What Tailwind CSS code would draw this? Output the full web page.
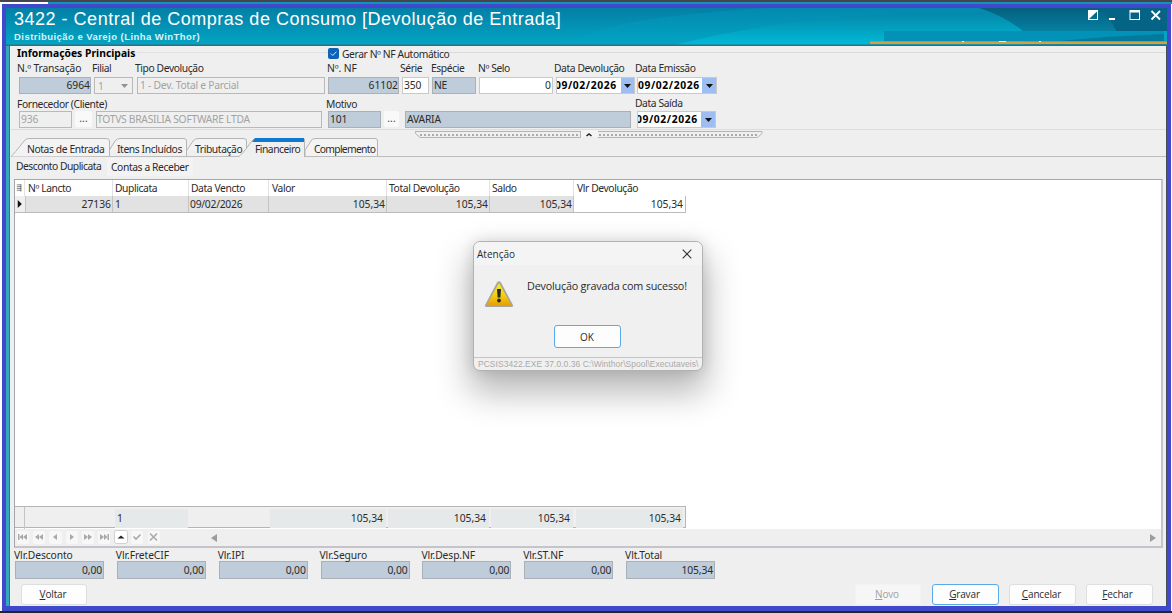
<!DOCTYPE html>
<html lang="pt-BR">
<head>
  <meta charset="UTF-8">
  <meta name="viewport" content="width=device-width, initial-scale=1.0">
  <title>3422 - Central de Compras de Consumo</title>
  <script src="https://cdn.jsdelivr.net/npm/@tailwindcss/browser@4"></script>
</head>
<body class="w-[1172px] h-[613px] overflow-hidden bg-white font-['Noto_Sans',sans-serif] text-[10.3px] leading-[14px] tracking-[-0.4px] text-[#2b2b2b] whitespace-nowrap">
  <div class="relative h-[613px] flex flex-col">
    <div class="h-[2px] shrink-0 bg-[#46454f]"></div>
    <div class="h-[2px] shrink-0 bg-[#1293b4] ml-[48px]"></div>

    <!-- window frame -->
    <div class="ml-[2px] mr-[1px] h-[607px] shrink-0 border-4 border-b-[5px] border-[#4048cb] flex flex-col bg-[#4048cb]">
      <!-- title bar -->
      <header class="relative h-[38px] shrink-0 bg-linear-to-b from-[#047fa5] to-[#02a6c5]">
        <svg class="absolute inset-0 w-full h-full" viewBox="6 8 1161 38" preserveAspectRatio="none">
          <defs>
            <linearGradient id="upper" x1="0" y1="0" x2="0" y2="1">
              <stop offset="0" stop-color="#0390b5"/><stop offset="1" stop-color="#00a5c5"/>
            </linearGradient>
            <linearGradient id="wave" x1="0" y1="0" x2="0" y2="1">
              <stop offset="0" stop-color="#0587a9"/><stop offset="1" stop-color="#00bcd9"/>
            </linearGradient>
            <linearGradient id="deep" x1="0" y1="0" x2="0" y2="1">
              <stop offset="0" stop-color="#05607f"/><stop offset="1" stop-color="#0581a2"/>
            </linearGradient>
          </defs>
          <path d="M560 46 Q600 18 770 8 H1167 V46Z" fill="url(#upper)" opacity=".6"/>
          <path d="M675 45 Q770 20 900 13 Q1010 10 1100 20 V46 H675Z" fill="url(#wave)"/>
          <path d="M979 8 Q1005 16 1024 32 H1167 V8Z" fill="url(#deep)"/>
          <path d="M1100 8Q1110 18 1117 32 H1167 V8Z" fill="#056486"/>
          <path d="M1024 31H1167V46H1024Z" fill="#03a3c2"/>
          <rect x="884" y="31" width="280" height="10" fill="#0292b7"/>
          <path d="M1060 41Q1110 36 1164 34 V41Z" fill="#03799c"/>
          <rect x="870" y="41.500" width="297" height="2.500" fill="#d6a13a"/>
          <path d="M962 41.500h2M999 41.500h7M1039 41.500h2" stroke="#e9f3ee" stroke-width="1"/>
          <path d="M6 45.300H1167" stroke="#3f6974" stroke-width="1.400"/>
        </svg>
        <div class="relative flex justify-between pl-2 text-white font-['Liberation_Sans',Arial,sans-serif]">
          <div>
            <h1 class="text-[18px] leading-[23px] tracking-[0.51px]">3422 - Central de Compras de Consumo [Devolução de Entrada]</h1>
            <p class="text-[9.5px] leading-[12px] font-bold tracking-[0.45px] text-[#d9f3fa]">Distribuição e Varejo (Linha WinThor)</p>
          </div>
          <svg class="w-[76px] h-[14px] mr-[4px]" viewBox="1087 8 76 14" fill="none" stroke="#fff">
            <rect x="1088.5" y="10.5" width="9" height="9"/>
            <path d="M1089 19V11h8.500z" fill="#fff" stroke="none"/>
            <path d="M1109 19h6" stroke-width="2"/>
            <rect x="1130" y="10.500" width="9.500" height="9"/>
            <path d="M1130 11.500h9.500" stroke-width="2"/>
            <path d="M1151.500 11l8.500 8.500M1160 11l-8.500 8.500" stroke-width="1.800"/>
          </svg>
        </div>
      </header>

      <!-- content -->
      <main class="h-[560px] shrink-0 bg-[#efefef] border-l-[3px] border-l-[#35a9bc] border-r border-r-[#44505a] flex flex-col">
       <div class="h-[560px] border-l border-[#5d6569] pl-px flex flex-col">
        <section class="relative h-[84px] shrink-0 border-b border-[#dcdcdc] pl-[6px]">
          <div class="absolute left-[310px] right-0 top-[6px] h-px bg-[#dadada]"></div>
          <div class="absolute left-[126px] w-[188px] top-[6px] h-px bg-[#e2e2e2]"></div>
          <div class="relative flex h-[15px] items-center">
            <b class="w-[311px] -mt-px tracking-[0.03px] text-black">Informações Principais</b>
            <label class="flex items-center gap-[3px] bg-[#efefef]">
              <svg class="w-[11px] h-[11px]" viewBox="0 0 11 11"><rect width="11" height="11" rx="2" fill="#0f63b4"/><path d="M2.800 5.500l2 2 3.600-3.800" fill="none" stroke="#d5e8fa"/></svg>
              Gerar Nº NF Automático
            </label>
          </div>

          <div class="grid grid-cols-[75px_43px_191px_74px_30px_47px_77px_81px_80px] h-[34px] pl-[2px]">
            <div>
              <div class="-ml-[2px] h-[16px] tracking-[-0.15px]">N.º Transação</div>
              <div class="w-[72px] h-[17px] border border-[#a9b0b8] bg-[#bfccd9] text-right tracking-normal">6964</div>
            </div>
            <div>
              <div class="-ml-[2px] h-[16px]">Filial</div>
              <div class="w-[39px] h-[17px] border border-[#b9b9b9] px-[3px] text-[#a3a3a3] flex justify-between items-center">1<svg class="w-[7px] h-[4px] mr-px" viewBox="0 0 7 4"><path d="M0 0h7L3.500 4z" fill="#929292"/></svg></div>
            </div>
            <div>
              <div class="-ml-[2px] h-[16px]">Tipo Devolução</div>
              <div class="w-[188px] h-[17px] border border-[#b9b9b9] px-[2px] text-[#a3a3a3] tracking-[-0.25px]">1 - Dev. Total e Parcial</div>
            </div>
            <div>
              <div class="-ml-px h-[16px] tracking-[-0.1px]">Nº. NF</div>
              <div class="w-[71px] h-[17px] border border-[#a9b0b8] bg-[#bfccd9] text-right tracking-normal">61102</div>
            </div>
            <div>
              <div class="-ml-[2px] h-[16px]">Série</div>
              <div class="w-[27px] h-[17px] border border-[#c9c9c9] bg-white pl-px tracking-[-0.2px]">350</div>
            </div>
            <div>
              <div class="-ml-px h-[16px]">Espécie</div>
              <div class="w-[44px] h-[17px] border border-[#a9b0b8] bg-[#bfccd9] pl-px">NE</div>
            </div>
            <div>
              <div class="-ml-px h-[16px]">Nº Selo</div>
              <div class="w-[74px] h-[17px] border border-[#c9c9c9] bg-white text-right pr-px tracking-normal">0</div>
            </div>
            <div>
              <div class="-ml-[2px] h-[16px]">Data Devolução</div>
              <div class="w-[79px] h-[17px] border border-[#c9c9c9] bg-white flex justify-between overflow-hidden">
                <b class="-ml-[2px] tracking-[0.6px] text-black">09/02/2026</b>
                <span class="w-[13px] bg-[#9dbdf3] flex items-center justify-center"><svg class="w-[7px] h-[4px]" viewBox="0 0 7 4"><path d="M0 0h7L3.500 4z" fill="#111"/></svg></span>
              </div>
            </div>
            <div>
              <div class="-ml-[2px] h-[16px]">Data Emissão</div>
              <div class="w-[80px] h-[17px] border border-[#c9c9c9] bg-white flex justify-between overflow-hidden">
                <b class="tracking-[0.6px] text-black">09/02/2026</b>
                <span class="w-[14px] bg-[#9dbdf3] flex items-center justify-center"><svg class="w-[7px] h-[4px]" viewBox="0 0 7 4"><path d="M0 0h7L3.500 4z" fill="#111"/></svg></span>
              </div>
            </div>
          </div>

          <div class="flex pl-[2px] mt-[2px]">
            <div class="w-[309px]">
              <div class="-ml-[2px] h-[14px]">Fornecedor (Cliente)</div>
              <div class="flex text-[#a3a3a3]">
                <div class="w-[53px] h-[17px] border border-[#b9b9b9] pl-px tracking-[-0.2px]">936</div>
                <div class="w-[17px] h-[16px] ml-[3px] rounded-xs bg-[#f9f9f9] text-center text-[#444] leading-[15px] tracking-normal">...</div>
                <div class="w-[226px] h-[17px] ml-[4px] border border-[#b9b9b9] tracking-[-0.28px]">TOTVS BRASILIA SOFTWARE LTDA</div>
              </div>
            </div>
            <div class="w-[309px]">
              <div class="-ml-[2px] h-[14px]">Motivo</div>
              <div class="flex">
                <div class="w-[53px] h-[17px] border border-[#a9b0b8] bg-[#bfccd9] pl-px tracking-[-0.2px]">101</div>
                <div class="w-[15px] h-[16px] ml-[3px] rounded-xs bg-[#f9f9f9] text-center text-[#444] leading-[15px] tracking-normal">...</div>
                <div class="w-[226px] h-[17px] ml-[6px] border border-[#a9b0b8] bg-[#bfccd9] pl-px tracking-[-0.2px]">AVARIA</div>
              </div>
            </div>
            <div>
              <div class="-ml-[2px] -mt-px h-[15px]">Data Saída</div>
              <div class="w-[79px] h-[17px] border border-[#c9c9c9] bg-white flex justify-between overflow-hidden">
                <b class="-ml-[2px] tracking-[0.6px] text-black">09/02/2026</b>
                <span class="w-[14px] bg-[#9dbdf3] flex items-center justify-center"><svg class="w-[7px] h-[4px]" viewBox="0 0 7 4"><path d="M0 0h7L3.500 4z" fill="#111"/></svg></span>
              </div>
            </div>
          </div>
        </section>

        <!-- splitter handle -->
        <svg class="w-[349px] h-[8px] ml-[403px] shrink-0" viewBox="414 130 349 8" fill="none">
          <path d="M415.500 131.500H580.500V137.500H420L415.500 133.500zM598 137.500H757.500L762 133.500V131.500H415.500" stroke="#b4b4b4"/>
          <path d="M420 135H578M599 135H758" stroke="#aaa" stroke-width="2" stroke-dasharray="2 2"/>
          <path d="M581 130h17v7h-17z" fill="#f4f4f4"/>
          <path d="M586.500 136l2.500-2 2.500 2" stroke="#222" stroke-width="1.600"/>
        </svg>

        <!-- main tabs -->
        <nav class="relative h-[19px] shrink-0 border-b border-[#bcbcbc]">
          <svg class="absolute left-0 top-0 w-[370px] h-[19px]" viewBox="11 138 370 19" fill="#f3f3f3" stroke="#b5b5b5">
            <path d="M11 156.500Q14 154 24 141Q26 138.500 29 138.500H106Q109.500 138.500 109.500 141V156"/>
            <path d="M109.500 150L115 141Q117 138.500 120 138.500H184Q186.500 138.500 186.500 141V156"/>
            <path d="M187 150L193 141Q195 138.500 198 138.500H244Q246.500 138.500 246.500 141V156"/>
            <path d="M305 156V150L311 141Q312 138.500 315 138.500H375Q377.500 138.500 377.500 141V156"/>
            <path d="M238 157Q242 155 251 142L254 139H304.500V157" fill="#efefef"/>
            <path d="M255 138H304V142H252z" fill="#0f7ad1" stroke="none"/>
          </svg>
          <div class="relative grid grid-cols-[90px_78px_59px_59px_70px] pl-[16px] pt-[4px]">
            <span>Notas de Entrada</span>
            <span>Itens Incluídos</span>
            <span>Tributação</span>
            <span class="tracking-[-0.5px] pl-px">Financeiro</span>
            <span class="tracking-[-0.7px] pl-px">Complemento</span>
          </div>
        </nav>
        <nav class="flex h-[22px] shrink-0 pl-[5px]">
          <span class="w-[91px] pt-[2px] tracking-[-0.5px]">Desconto Duplicata</span>
          <span class="h-[18px] w-[86px] mt-px pl-[4px] pt-[2px] bg-[#f3f3f3]">Contas a Receber</span>
        </nav>

        <!-- data grid -->
        <section class="w-[1149px] h-[369px] ml-[3px] shrink-0 border border-[#a5a5ae] border-b-2 border-b-[#c5c4ca] border-r-2 border-r-[#c5c4ca] bg-white flex flex-col">
          <div class="w-[671px] h-[16px] grid grid-cols-[11px_87px_76px_80px_118px_103px_84px_112px] divide-x divide-[#e2e2e2]">
            <svg class="w-[10px] h-[16px]" viewBox="0 0 10 16"><path d="M2 4.500h5M2 6.500h5M2 8.500h5M2 10.500h5M6.500 4v8" stroke="#555" stroke-width=".8"/></svg>
            <span class="pl-[2px] pt-px">Nº Lancto</span>
            <span class="pl-[2px] pt-px">Duplicata</span>
            <span class="pl-[2px] pt-px">Data Vencto</span>
            <span class="pl-[3px] pt-px">Valor</span>
            <span class="pl-[2px] pt-px">Total Devolução</span>
            <span class="pl-[2px] pt-px">Saldo</span>
            <span class="pl-[3px] pt-px">Vlr Devolução</span>
          </div>
          <div class="w-[671px] h-[17px] grid grid-cols-[11px_87px_76px_80px_118px_103px_84px_111px] divide-x divide-[#c4c4c4] border-b border-r border-[#bcbcbc] bg-[#e2e2e2] text-right leading-[16px] tracking-normal">
            <svg class="w-[11px] h-[16px] bg-[#efefef]" viewBox="0 0 11 16"><path d="M3 3.500v9l4.500-4.500z" fill="#111"/></svg>
            <span class="pr-px">27136</span>
            <span class="pl-[2px] text-left">1</span>
            <span class="pl-px text-left tracking-[-0.25px]">09/02/2026</span>
            <span class="pr-px">105,34</span>
            <span class="pr-px">105,34</span>
            <span class="pr-px">105,34</span>
            <span class="pr-[2px] bg-white">105,34</span>
          </div>
          <div class="grow"></div>
          <div class="w-[671px] h-[22px] shrink-0 grid grid-cols-[10px_90px_73px_82px_116px_2px_101px_2px_82px_3px_107px] border-t border-r border-b border-[#b5b5b5] bg-[#efefef] text-right leading-[19px] tracking-normal py-[2px]">
            <span class="border-r border-[#c4c4c4] -my-[2px]"></span><span></span>
            <span class="pl-[2px] text-left bg-[#e5e9e9]">1</span><span></span>
            <span class="pr-[3px] bg-[#e5e9e9]">105,34</span><span></span>
            <span class="pr-[3px] bg-[#e5e9e9]">105,34</span><span></span>
            <span class="pr-[3px] bg-[#e5e9e9]">105,34</span><span></span>
            <span class="pr-[2px] bg-[#e5e9e9]">105,34</span>
          </div>
          <div class="h-[17px] mt-px shrink-0 bg-[#efefef] flex justify-between">
            <svg class="w-[210px] h-[16px]" viewBox="15 530 210 16" fill="#a9a9a9">
              <g fill="#f7f7f7"><rect x="17" y="532" width="12" height="13" rx="2"/><rect x="33" y="532" width="12" height="13" rx="2"/><rect x="49" y="532" width="13" height="13" rx="2"/><rect x="66" y="532" width="12" height="13" rx="2"/><rect x="82" y="532" width="12" height="13" rx="2"/><rect x="98" y="532" width="12" height="13" rx="2"/><rect x="131" y="532" width="12" height="13" rx="2"/><rect x="148" y="532" width="12" height="13" rx="2"/></g>
              <rect x="114.500" y="531.500" width="13" height="13" rx="2" fill="#fff" stroke="#d0d0d0"/>
              <path d="M18 535h1.500v6H18zM23 535v6l-3.500-3zM27 535v6l-4-3zM39 535v6l-4-3zM43 535v6l-4-3zM57 535v6l-4-3zM70 535v6l4-3zM84 535v6l4-3zM88 535v6l4-3zM100 535v6l4-3zM104 535v6l3.500-3zM107.500 535h1.500v6h-1.500z"/>
              <path d="M117.500 539.500l3.500-3 3.500 3z" fill="#222"/>
              <path d="M133.500 537.500l2.500 2.500 4.500-4.500M150 534.500l7 7M157 534.500l-7 7" fill="none" stroke="#a9a9a9" stroke-width="1.600"/>
            </svg>
            <div class="grow flex justify-between items-center pl-[2px]">
              <svg class="w-[6px] h-[8px] -ml-[16px]" viewBox="0 0 6 8"><path d="M6 0v8L0 4z" fill="#9c9c9c"/></svg>
              <svg class="w-[6px] h-[8px] mr-[5px]" viewBox="0 0 6 8"><path d="M0 0v8l6-4z" fill="#9c9c9c"/></svg>
            </div>
          </div>
        </section>

        <!-- totals -->
        <section class="grid grid-cols-[repeat(7,101.85px)] pl-[4px] shrink-0 tracking-[-0.1px]">
          <div><div class="-ml-px h-[13px]">Vlr.Desconto</div><div class="w-[89px] h-[18px] border border-[#a9b0b8] bg-[#bfccd9] text-right pr-px leading-[16px]">0,00</div></div>
          <div><div class="-ml-px h-[13px]">Vlr.FreteCIF</div><div class="w-[89px] h-[18px] border border-[#a9b0b8] bg-[#bfccd9] text-right pr-px leading-[16px]">0,00</div></div>
          <div><div class="-ml-px h-[13px]">Vlr.IPI</div><div class="w-[89px] h-[18px] border border-[#a9b0b8] bg-[#bfccd9] text-right pr-px leading-[16px]">0,00</div></div>
          <div><div class="-ml-px h-[13px]">Vlr.Seguro</div><div class="w-[89px] h-[18px] border border-[#a9b0b8] bg-[#bfccd9] text-right pr-px leading-[16px]">0,00</div></div>
          <div><div class="-ml-px h-[13px]">Vlr.Desp.NF</div><div class="w-[89px] h-[18px] border border-[#a9b0b8] bg-[#bfccd9] text-right pr-px leading-[16px]">0,00</div></div>
          <div><div class="-ml-px h-[13px]">Vlr.ST.NF</div><div class="w-[89px] h-[18px] border border-[#a9b0b8] bg-[#bfccd9] text-right pr-px leading-[16px]">0,00</div></div>
          <div><div class="-ml-px h-[13px]">Vlt.Total</div><div class="w-[89px] h-[18px] border border-[#a9b0b8] bg-[#bfccd9] text-right pr-px leading-[16px]">105,34</div></div>
        </section>

        <footer class="flex mt-[5px] pl-[10px] pr-[13px] font-['Open_Sans',sans-serif] text-[10px] leading-[19px] tracking-[-0.15px] text-center">
          <button class="w-[66px] h-[21px] rounded-[3px] border border-[#dedede] bg-[#fdfdfd] pr-[2px]"><u>V</u>oltar</button>
          <button class="w-[66px] h-[21px] ml-auto rounded-[3px] border border-[#f3f3f3] bg-[#f6f6f6] text-[#a0a0a0] pr-[2px]"><u>N</u>ovo</button>
          <button class="w-[67px] h-[21px] ml-[11px] rounded-[3px] border border-[#5ba9e6] bg-[#fdfdfd] pr-[2px]"><u>G</u>ravar</button>
          <button class="w-[67px] h-[21px] ml-[10px] rounded-[3px] border border-[#dedede] bg-[#fdfdfd] pr-[2px]"><u>C</u>ancelar</button>
          <button class="w-[67px] h-[21px] ml-[10px] rounded-[3px] border border-[#dedede] bg-[#fdfdfd] pr-[4px]"><u>F</u>echar</button>
        </footer>
       </div>
      </main>
    </div>
    <div class="h-[2px] shrink-0 bg-[#22252f]"></div>

    <!-- message dialog -->
    <div class="absolute left-[473px] top-[241px] w-[230px] h-[130px] rounded-[7px] border border-[#b2b2b2] bg-[#f0f0f0] overflow-visible shadow-[0_18px_34px_4px_rgba(0,0,0,0.28),0_0_14px_rgba(0,0,0,0.12)] flex flex-col font-['Open_Sans',sans-serif] tracking-normal">
      <div class="h-[23px] rounded-t-[6px] bg-[#f4f4f4] flex items-center justify-between pl-[3px] pr-[10px] text-[10px]">
        <span>Atenção</span>
        <svg class="w-[10px] h-[10px]" viewBox="0 0 10 10"><path d="M.7.7l8.600 8.600M9.300.7L.7 9.300" stroke="#333" stroke-width="1.100"/></svg>
      </div>
      <div class="h-[60px] flex pl-[10px] pt-[14px]">
        <svg class="w-[30px] h-[30px] mt-px" viewBox="0 0 30 30">
          <defs><linearGradient id="warn" x1="0" y1="0" x2="0" y2="1"><stop offset="0" stop-color="#f4ee2a"/><stop offset=".55" stop-color="#f8cf0b"/><stop offset="1" stop-color="#e4a00c"/></linearGradient></defs>
          <path d="M13 2.500Q15 0 17 2.500L29 25Q29.500 27 27.500 27H2.500Q.5 27 1 25z" fill="#a8a59c"/>
          <path d="M15 3L27.300 25H2.700z" fill="url(#warn)"/>
          <path d="M13 9h4l-.6 8.500h-2.800z" fill="#262a2b"/><circle cx="15" cy="20.500" r="1.900" fill="#262a2b"/>
        </svg>
        <span class="ml-[13px] text-[10.8px] tracking-[-0.2px]">Devolução gravada com sucesso!</span>
      </div>
      <div class="h-[32px] pl-[80px] text-[10px]"><button class="w-[67px] h-[23px] rounded-[3px] border border-[#5ba9e6] bg-[#fdfdfd] pr-[1px]">OK</button></div>
      <div class="h-[13px] border-t border-[#c6c6c6] pl-[4px] text-[8.5px] leading-[12px] tracking-[0.03px] text-[#aaa] font-['Liberation_Sans',Arial,sans-serif]">PCSIS3422.EXE 37.0.0.36 C:\Winthor\Spool\Executaveis\</div>
    </div>
  </div>
</body>
</html>
